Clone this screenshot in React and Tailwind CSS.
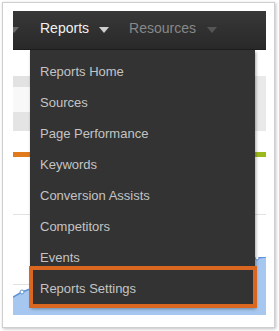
import React from 'react'

const MENU = [
  'Reports Home',
  'Sources',
  'Page Performance',
  'Keywords',
  'Conversion Assists',
  'Competitors',
  'Events',
]

function Caret({ className }) {
  return (
    <svg width="10" height="6" viewBox="0 0 10 6" className={className}>
      <path d="M0 0 L10 0 L5 6 Z" fill="currentColor" />
    </svg>
  )
}

function AreaChart() {
  return (
    <svg width="253" height="60" viewBox="0 0 253 60" className="absolute left-0 bottom-0">
      <polygon
        points="0,40 9,35 17,32 120,18 230,3 244,1 253,0 253,58 0,58"
        fill="#a6c7ef"
      />
      <polyline
        points="0,40 9,35 17,32 120,18 230,3 244,1 253,0"
        fill="none"
        stroke="#5f92d6"
        strokeWidth="1.5"
      />
      <circle cx="9" cy="35" r="2" fill="#fff" stroke="#5f92d6" strokeWidth="1" />
      <circle cx="244" cy="1" r="2" fill="#fff" stroke="#5f92d6" strokeWidth="1" />
    </svg>
  )
}

export default function App() {
  return (
    <div
      className="w-[279px] h-[331px] bg-white p-[2px] overflow-hidden"
      style={{ fontFamily: '"Liberation Sans", Arial, sans-serif' }}
    >
      <div className="w-[273px] h-[326px] border border-[#cfcfcf] shadow-[1px_1px_3px_rgba(0,0,0,0.25)] bg-white pl-[10px] pt-[8px]">
        <div className="w-[253px] h-[306px] flex flex-col">
          {/* nav bar */}
          <div className="h-[39px] flex items-center pb-[3px] overflow-hidden bg-gradient-to-b from-[#383838] to-[#292929] border-b border-[#1e1e1e] text-[14px]">
            <Caret className="shrink-0 text-[#6a6a6a] -ml-[4px] mt-[2px]" />
            <span className="ml-[21px] text-[#f0f0f0]">Reports</span>
            <Caret className="ml-[10px] mt-[2px] text-[#cfcfcf]" />
            <span className="ml-[20px] text-[#888888]">Resources</span>
            <Caret className="ml-[11px] mt-[2px] text-[#555]" />
          </div>

          {/* page body behind menu */}
          <div className="relative flex-1 flex flex-col">
            <div className="h-[26px]" />
            <div className="h-[55px] flex">
              <div className="w-[17px] flex flex-col">
                <div className="h-[11px] bg-[#e2e2e2]" />
                <div className="h-[25px] bg-[#f8f8f8]" />
                <div className="h-[19px] bg-[#e4e4e4]" />
              </div>
              <div className="flex-1 bg-[#e9e9e9]" />
            </div>
            <div className="h-[21px]" />
            <div className="h-[5px] flex">
              <div className="flex-1 bg-[#e07a1c]" />
              <div className="w-[11px] bg-[#9cb91c]" />
            </div>
            <div className="h-[57px]" />
            <div className="h-px bg-[#e2e2e2]" />
            <div className="h-[69px]" />
            <div className="h-px bg-[#e2e2e2]" />
            <AreaChart />

            {/* dropdown */}
            <div className="absolute left-[17px] top-0 w-[225px] h-[257px] bg-[#333333] shadow-[1px_2px_3px_rgba(0,0,0,0.35)] pt-[6px] text-[13px] text-[#c4c4c4]">
              {MENU.map((m) => (
                <div key={m} className="h-[31px] flex items-center pl-[10px]">
                  {m}
                </div>
              ))}
              <div className="-mt-[7px] -ml-px -mr-[2px] h-[42px] border-[4px] border-[#d9671f] bg-[#333333] flex items-center pl-[7px] pt-[3px]">
                Reports Settings
              </div>
            </div>
          </div>
        </div>
      </div>
    </div>
  )
}
